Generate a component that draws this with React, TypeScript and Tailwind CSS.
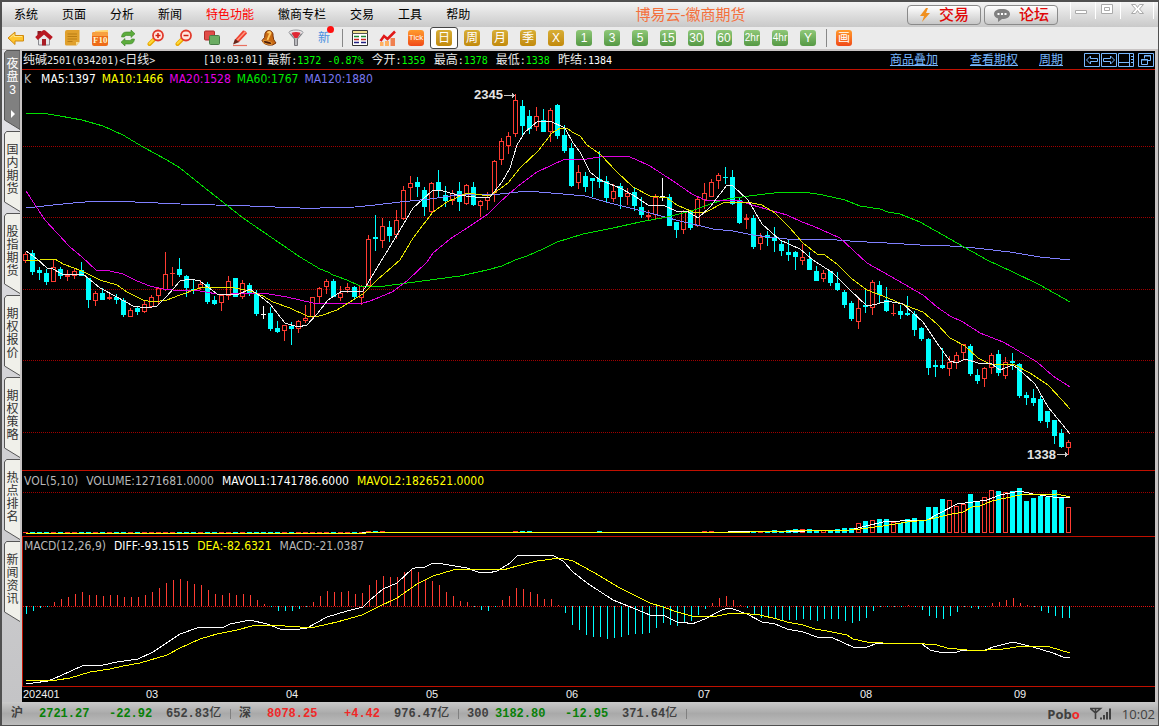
import { ReactNode } from 'react';

type Candle = [kind: 'r' | 'c' | 'w', high: number, top: number, bottom: number, low: number];

const STEP = 7;
const CHART_LEFT = 22;
const CHART_WIDTH = 1133;
const VOL_BASE = 533;
const MACD_ZERO = 606;

const candles: Candle[] = [
  ['r', 252, 254, 261, 263], ['c', 250, 253, 272, 275], ['c', 267, 270, 273, 280], ['c', 269, 273, 282, 285],
  ['r', 260, 267, 282, 282], ['c', 267, 269, 276, 279], ['r', 270, 275, 277, 281], ['r', 268, 271, 276, 279],
  ['c', 262, 270, 276, 276], ['c', 278, 278, 300, 308], ['r', 291, 293, 301, 306], ['c', 288, 293, 300, 300],
  ['r', 293, 297, 299, 300], ['c', 294, 297, 300, 304], ['c', 298, 300, 315, 317], ['r', 308, 310, 317, 317],
  ['c', 306, 308, 312, 315], ['r', 301, 304, 312, 313], ['r', 295, 297, 307, 307], ['r', 287, 288, 296, 305],
  ['r', 252, 274, 290, 291], ['r', 267, 273, 274, 286], ['c', 258, 269, 275, 277], ['c', 275, 276, 288, 297],
  ['c', 280, 289, 291, 294], ['r', 280, 284, 288, 290], ['c', 282, 284, 302, 304], ['c', 296, 300, 304, 305],
  ['r', 294, 295, 303, 311], ['r', 276, 281, 296, 300], ['c', 278, 278, 297, 297], ['r', 280, 283, 297, 299],
  ['c', 283, 285, 294, 296], ['c', 290, 293, 314, 316], ['w', 306, 314, 315, 319], ['c', 307, 313, 329, 331],
  ['c', 321, 328, 332, 333], ['r', 325, 325, 331, 341], ['c', 322, 326, 329, 345], ['r', 320, 321, 329, 333],
  ['r', 305, 318, 321, 323], ['r', 297, 297, 317, 319], ['r', 287, 288, 297, 304], ['r', 279, 281, 287, 294],
  ['c', 279, 281, 297, 297], ['r', 286, 293, 298, 301], ['r', 283, 287, 290, 293], ['c', 286, 287, 297, 299],
  ['r', 285, 286, 298, 305], ['r', 235, 239, 286, 287], ['c', 215, 237, 239, 251], ['r', 218, 226, 241, 248],
  ['c', 221, 227, 236, 242], ['r', 210, 220, 235, 239], ['r', 186, 190, 219, 220], ['r', 176, 183, 188, 201],
  ['c', 177, 182, 187, 197], ['c', 187, 190, 207, 216], ['r', 182, 183, 212, 215], ['c', 170, 182, 191, 197],
  ['c', 186, 195, 201, 207], ['r', 190, 193, 201, 205], ['c', 182, 191, 202, 211], ['r', 184, 185, 204, 205],
  ['c', 182, 187, 205, 206], ['r', 200, 201, 206, 217], ['r', 192, 197, 201, 210], ['r', 160, 161, 193, 202],
  ['r', 138, 141, 160, 165], ['r', 132, 136, 146, 154], ['r', 94, 100, 134, 137], ['c', 100, 106, 126, 136],
  ['c', 110, 116, 129, 134], ['r', 107, 116, 127, 131], ['c', 109, 120, 132, 132], ['r', 108, 110, 132, 142],
  ['c', 104, 105, 136, 139], ['c', 125, 135, 151, 153], ['c', 143, 148, 186, 187], ['r', 165, 172, 183, 189],
  ['c', 172, 176, 187, 192], ['c', 178, 178, 181, 197], ['c', 151, 179, 182, 188], ['c', 176, 181, 198, 202],
  ['r', 184, 191, 199, 202], ['c', 183, 186, 197, 209], ['r', 188, 193, 197, 205], ['c', 188, 192, 206, 211],
  ['c', 197, 207, 215, 218], ['r', 210, 215, 217, 220], ['r', 194, 197, 215, 219], ['w', 178, 196, 197, 201],
  ['c', 194, 197, 226, 226], ['c', 222, 222, 230, 238], ['r', 210, 211, 230, 234], ['c', 211, 212, 228, 230],
  ['r', 197, 199, 226, 227], ['r', 183, 193, 200, 209], ['r', 179, 182, 197, 197], ['r', 173, 175, 181, 189],
  ['c', 167, 177, 178, 184], ['c', 170, 177, 204, 205], ['c', 198, 200, 223, 224], ['r', 214, 218, 220, 229],
  ['c', 215, 218, 247, 249], ['r', 233, 237, 244, 250], ['c', 231, 235, 238, 246], ['c', 227, 237, 241, 252],
  ['c', 240, 244, 251, 256], ['c', 240, 252, 255, 261], ['c', 251, 252, 257, 270], ['r', 244, 257, 261, 265],
  ['c', 252, 259, 270, 270], ['c', 266, 271, 281, 281], ['r', 270, 273, 279, 282], ['c', 271, 271, 283, 286],
  ['c', 272, 283, 290, 291], ['c', 290, 292, 305, 308], ['c', 301, 303, 319, 321], ['r', 298, 308, 322, 329],
  ['c', 288, 305, 307, 313], ['r', 280, 282, 308, 315], ['c', 281, 285, 295, 304], ['c', 287, 300, 311, 312],
  ['r', 304, 313, 314, 316], ['c', 305, 311, 315, 319], ['c', 296, 313, 315, 316], ['c', 311, 314, 330, 336],
  ['c', 327, 328, 339, 341], ['c', 338, 339, 368, 375], ['c', 360, 365, 367, 377], ['c', 348, 365, 368, 369],
  ['r', 356, 362, 369, 376], ['r', 352, 355, 363, 369], ['r', 344, 344, 353, 359], ['c', 344, 346, 374, 376],
  ['c', 369, 375, 381, 384], ['r', 367, 368, 379, 387], ['r', 353, 355, 368, 374], ['c', 350, 354, 373, 376],
  ['r', 357, 362, 376, 379], ['c', 353, 361, 363, 370], ['c', 363, 364, 396, 398], ['c', 392, 395, 398, 405],
  ['c', 389, 398, 403, 406], ['c', 396, 399, 421, 423], ['c', 411, 411, 422, 428], ['c', 420, 420, 436, 444],
  ['c', 429, 433, 447, 448], ['r', 440, 442, 448, 455],
];

// volume tops for the last bars, everything before is nearly flat
const volStart = 105;
const volTops = [
  531, 531, 530, 531, 530, 529, 529, 529, 531, 530, 530, 529, 528, 528, 523, 521, 520, 519, 519, 522, 523, 519, 518,
  520, 507, 507, 499, 500, 506, 504, 494, 502, 497, 490, 491, 492, 491, 488, 501, 498, 496, 497, 490, 497, 507,
];
const volBumps = [49, 50, 51, 70, 71, 72, 82, 97, 98];

const macdEnds = [
  614, 611, 608, 607, 602, 599, 597, 594, 592, 595, 595, 596, 595, 595, 597, 597, 597, 595, 592, 588, 583, 580, 579,
  581, 584, 585, 590, 594, 595, 593, 595, 594, 595, 600, 604, 607, 611, 611, 611, 609, 607, 602, 596, 591, 592, 592,
  591, 594, 593, 585, 580, 576, 577, 577, 572, 569, 572, 579, 581, 585, 592, 596, 601, 602, 607, 610, 611, 607, 600,
  596, 588, 589, 592, 594, 599, 599, 605, 613, 625, 630, 635, 637, 637, 639, 638, 637, 635, 634, 634, 633, 628, 623,
  625, 626, 623, 621, 615, 609, 603, 598, 596, 600, 605, 608, 615, 618, 618, 619, 621, 620, 620, 619, 620, 621, 619,
  619, 619, 621, 623, 621, 618, 611, 607, 607, 607, 607, 605, 607, 610, 616, 618, 619, 616, 612, 607, 608, 609, 607,
  603, 602, 600, 598, 603, 605, 607, 611, 613, 616, 618, 618,
];

const priceLines = [
  {
    color: '#8080ff',
    points:
      '26,208 53,205 73,203 97,201 117,201 135,202 180,204 250,206 300,208 320,208 355,207 375,205 400,202 430,199 450,196 467,194 500,194 527,191 563,194 585,196 610,203 630,208 650,213 680,221 713,229 733,231 753,235 787,239 823,239 850,241 867,242 887,243 920,245 950,246 975,248 1010,252 1040,257 1070,260',
  },
  {
    color: '#00e000',
    points:
      '26,113 42,113 60,116 82,120 103,126 123,135 143,147 167,160 180,168 200,184 243,218 300,257 320,269 328,272 333,275 347,280 360,286 377,287 400,284 430,280 460,276 487,270 502,266 515,260 527,256 543,249 557,242 583,234 613,228 640,222 667,217 687,212 697,209 713,203 727,199 757,195 782,192 810,193 823,195 845,200 860,206 880,209 888,212 900,214 920,222 950,239 987,260 1013,272 1040,285 1070,302',
  },
  {
    color: '#e000e0',
    points:
      '26,191 45,220 70,247 82,257 96,270 110,271 123,274 137,281 150,286 163,289 173,290 200,291 223,295 240,293 263,293 287,297 313,303 340,304 363,303 370,301 380,297 392,292 407,281 427,262 433,253 450,239 467,228 488,214 500,202 517,187 537,172 565,159 587,159 600,157 627,156 635,159 650,166 673,181 692,194 705,200 740,201 752,205 787,215 802,222 813,226 840,238 853,250 867,263 890,276 923,295 937,307 950,316 963,322 980,333 1003,342 1012,347 1037,362 1053,376 1070,387',
  },
  {
    color: '#e6e600',
    points:
      '26,261 55,259 63,264 82,271 100,280 117,285 127,292 143,300 153,302 167,300 180,295 200,288 230,287 250,291 263,296 273,302 290,308 307,316 315,317 323,315 337,310 353,300 363,294 377,280 400,260 413,238 433,212 447,202 467,193 490,196 508,183 520,168 538,151 552,133 560,128 567,128 572,132 580,136 587,145 600,154 617,172 633,187 650,196 667,198 677,205 693,212 706,212 725,202 747,202 762,205 775,213 790,228 803,243 817,254 825,255 838,265 852,279 867,290 883,296 907,306 923,312 937,324 950,338 965,346 978,358 990,364 1013,364 1030,373 1048,385 1062,400 1070,409',
  },
  {
    color: '#f0f0f0',
    points:
      '26,251 37,259 47,268 53,269 62,274 83,274 100,288 117,297 133,306 147,308 157,306 167,296 180,281 190,279 200,281 217,294 237,295 250,289 260,296 270,304 285,323 298,327 307,325 317,314 328,300 342,291 363,291 383,258 400,230 413,208 432,191 440,190 457,195 475,197 490,197 502,182 510,168 517,145 525,132 538,121 550,121 565,128 573,143 580,152 590,172 600,180 620,188 633,195 648,205 663,205 678,212 687,211 698,218 710,207 727,185 733,186 748,200 762,224 780,240 800,249 813,260 833,273 850,290 867,306 877,304 887,301 903,304 923,322 937,343 950,361 957,363 965,359 978,363 992,364 1000,370 1013,365 1023,373 1035,384 1048,407 1062,424 1070,434',
  },
];

const volLines = [
  {
    color: '#ffffff',
    points:
      '26,533 362,533 376,532 728,532 734,531 805,531 850,530 862,527 883,522 900,521 927,520 938,514 957,504 973,502 987,500 1000,495 1020,491 1033,494 1053,497 1070,497',
  },
  {
    color: '#ffff00',
    points:
      '26,533 366,533 380,532 750,532 790,531 850,530 860,529 883,526 907,522 927,520 947,515 963,512 972,507 980,506 992,501 1020,495 1057,494 1070,497',
  },
];

const macdLines = [
  {
    color: '#ffffff',
    points:
      '26,683 33,683 48,681 60,676 82,666 103,665 117,662 138,659 153,652 180,634 200,627 222,628 230,624 250,620 267,624 280,629 300,629 307,628 327,617 347,611 363,607 370,600 383,589 397,583 412,569 418,567 425,567 433,563 443,564 467,568 478,572 488,573 497,571 510,563 517,556 537,555 552,555 563,561 573,572 587,583 613,600 628,606 650,615 663,615 677,622 683,622 692,624 705,619 720,611 727,608 733,609 747,614 762,622 775,624 787,629 803,632 817,637 833,638 853,647 867,647 878,643 913,643 922,644 930,650 943,653 957,652 963,650 983,651 993,647 1013,642 1033,647 1053,653 1063,657 1070,657',
  },
  {
    color: '#ffff00',
    points:
      '26,680 57,680 70,678 90,672 110,669 123,666 140,663 167,655 180,648 200,639 217,634 237,630 252,626 270,625 300,627 315,627 337,622 362,615 378,607 397,598 417,584 433,576 453,570 473,569 503,570 517,566 537,561 560,558 573,561 593,572 620,588 650,603 663,607 677,612 692,616 717,616 727,614 740,613 760,615 777,619 787,622 803,625 815,629 827,631 847,635 853,639 867,642 883,643 913,643 937,645 947,648 967,650 987,650 1003,649 1023,646 1050,647 1070,653',
  },
];

const menus = ['系统', '页面', '分析', '新闻', '特色功能', '徽商专栏', '交易', '工具', '帮助'];
const sideTabs = ['国内期货', '股指期货', '期权报价', '期权策略', '热点排名', '新闻资讯'];
const goldPeriods = ['周', '月', '季', 'X'];
const greenPeriods = ['1', '3', '5', '15', '30', '60', '2hr', '4hr', 'Y'];

const colorOf = { r: '#ff3c32', c: '#00ffff', w: '#ffffff' };

function Lines({ items }: { items: { color: string; points: string }[] }) {
  return (
    <>
      {items.map((l) => (
        <polyline key={l.color} points={l.points} fill="none" stroke={l.color} />
      ))}
    </>
  );
}

function Panel({ top, height, label, children }: { top: number; height: number; label: string; children: ReactNode }) {
  return (
    <svg
      role="img"
      aria-label={label}
      viewBox={`${CHART_LEFT} ${top} ${CHART_WIDTH} ${height}`}
      className="h-auto w-full"
      shapeRendering="crispEdges"
    >
      {children}
    </svg>
  );
}

function DottedLine({ y, color = '#a00000' }: { y: number; color?: string }) {
  return <path d={`M23 ${y + 0.5}H1155`} stroke={color} strokeDasharray="1 1" />;
}

function PricePanel() {
  return (
    <Panel top={88} height={382} label="K线">
      {[146, 217, 289, 360, 432].map((y) => (
        <DottedLine key={y} y={y} />
      ))}
      {candles.map(([kind, high, top, bottom, low], k) => {
        const x = 23 + k * STEP;
        const color = colorOf[kind];
        return (
          <g key={k}>
            {kind === 'r' ? (
              <>
                {top > high && <rect x={x + 2} y={high} width={1} height={top - high} fill={color} />}
                {low > bottom && <rect x={x + 2} y={bottom} width={1} height={low - bottom} fill={color} />}
                <rect x={x + 0.5} y={top + 0.5} width={4} height={Math.max(bottom - top - 1, 0.1)} fill="none" stroke={color} />
              </>
            ) : (
              <>
                <rect x={x + 2} y={high} width={1} height={low - high} fill={color} />
                <rect x={x} y={top} width={5} height={bottom - top} fill={color} />
              </>
            )}
          </g>
        );
      })}
      <Lines items={priceLines} />
      <g fontFamily="Liberation Sans, Arial, sans-serif" fontSize="13" fontWeight="bold" fill="#e4e4e4">
        <text x="474" y="99">2345</text>
        <text x="1027" y="459">1338</text>
      </g>
      <path d="M504 95.5h11M512.500 93v5M513.500 94v3M1057 454.500h11M1065.500 452v5M1066.500 453v3" stroke="#c8c8c8" fill="none" />
    </Panel>
  );
}

function VolumePanel() {
  return (
    <Panel top={488} height={48} label="成交量">
      <DottedLine y={492} />
      {candles.map(([kind], k) => {
        const x = 23 + k * STEP;
        if (k < volStart) {
          const y = volBumps.includes(k) ? 531 : 532;
          return <rect key={k} x={x} y={y} width={5} height={1} fill={kind === 'r' ? colorOf.r : colorOf.c} />;
        }
        const top = volTops[k - volStart];
        return kind === 'r' ? (
          <rect key={k} x={x + 0.5} y={top + 0.5} width={4} height={VOL_BASE - top - 1} fill="#000" stroke={colorOf.r} />
        ) : (
          <rect key={k} x={x} y={top} width={5} height={VOL_BASE - top} fill={colorOf.c} />
        );
      })}
      <Lines items={volLines} />
    </Panel>
  );
}

function MacdPanel() {
  return (
    <Panel top={553} height={133} label="MACD">
      <DottedLine y={MACD_ZERO} color="#e01010" />
      {macdEnds.map((end, k) => (
        <rect
          key={k}
          x={26 + k * STEP}
          y={Math.min(end, MACD_ZERO)}
          width={1}
          height={Math.abs(end - MACD_ZERO)}
          fill={end < MACD_ZERO ? colorOf.r : colorOf.c}
        />
      ))}
      <Lines items={macdLines} />
    </Panel>
  );
}

function Axis() {
  const marks: [number, string][] = [
    [23, '202401'], [146, '03'], [286, '04'], [426, '05'], [566, '06'], [698, '07'], [860, '08'], [1014, '09'],
  ];
  return (
    <svg viewBox={`${CHART_LEFT} 687 ${CHART_WIDTH} 15`} className="h-auto w-full">
      <g fontFamily="Liberation Sans, Arial, sans-serif" fontSize="11" fill="#f0f0f0">
        {marks.map(([x, label]) => (
          <text key={label} x={x} y={698}>
            {label}
          </text>
        ))}
      </g>
    </svg>
  );
}

function ToolButton({ label, children }: { label: string; children: ReactNode }) {
  return (
    <button aria-label={label} className="flex h-[22px] w-7 items-center justify-center">
      {children}
    </button>
  );
}

function ToolIcon({ label, children }: { label: string; children: ReactNode }) {
  return (
    <ToolButton label={label}>
      <svg viewBox="0 0 18 18" className="size-[18px]" fill="none">
        {children}
      </svg>
    </ToolButton>
  );
}

const badge = 'flex size-4 items-center justify-center rounded-[3px] leading-4 text-white';
const gold = 'bg-linear-to-b from-[#d8ae35] to-[#c28a08]';
const green = 'bg-linear-to-b from-[#8fc878] to-[#559944]';
const orange = 'bg-linear-to-b from-[#ff9a2c] to-[#f04818]';

function Magnifier({ plus }: { plus?: boolean }) {
  return (
    <>
      <path d="M7 10.500L2.500 15" stroke="#e8a800" strokeWidth="4" strokeLinecap="round" />
      <path d="M7 10L2.500 14.500" stroke="#ffd83a" strokeWidth="2" strokeLinecap="round" />
      <circle cx="11" cy="6.500" r="5" fill="#ffe6e0" stroke="#e23a2c" strokeWidth="1.800" />
      <path d={plus ? 'M8.500 6.500h5M11 4v5' : 'M8.500 6.500h5'} stroke="#d02010" strokeWidth="1.500" />
    </>
  );
}

function Toolbar() {
  return (
    <div className="flex h-[22px] items-center bg-[#ebebeb]">
      <ToolIcon label="后退">
        <path d="M1 9l7-6v3.500h8.500v5.500H8v3.500z" fill="#ffc52e" stroke="#d08a10" />
        <path d="M3.500 8.500L7 5.500v2h8" stroke="#ffe78a" />
      </ToolIcon>
      <ToolIcon label="主页">
        <path d="M3.500 8.500v7.500h11V8.500L9 4z" fill="#e6e6e8" stroke="#8a8a90" />
        <path d="M2.500 2h4v2l-4 3.500z" fill="#8a1c24" />
        <path d="M1.500 9.500L9 3l7.500 6.500" stroke="#b81822" strokeWidth="4" strokeLinejoin="round" />
        <rect x="7" y="10" width="4" height="6.500" fill="#a81c24" />
      </ToolIcon>
      <ToolIcon label="资讯">
        <path d="M2 3q0-2 2-2h12.500v12l-3 3.500H3.500Q2 16.500 2 15z" fill="#e0a02c" />
        <path d="M4.500 5h9.500M4.500 7.500h9.500M4.500 10h9.500M4.500 12.500h5" stroke="#b87c14" />
        <path d="M16.500 13h-3.500v3.500z" fill="#f8dc90" />
      </ToolIcon>
      <ToolIcon label="F10">
        <path d="M4 2q7-1 13-1v3H4z" fill="#ffd36a" />
        <rect x="1" y="3" width="16" height="14" rx="2" fill="#ee6c18" />
        <path d="M1 7V5q0-2 2-2h12q2 0 2 2v2z" fill="#f8a040" />
        <text x="2" y="14" fontSize="9" fontWeight="bold" fontFamily="Liberation Serif, serif" fill="#fff6cc">F10</text>
      </ToolIcon>
      <ToolIcon label="刷新">
        <path d="M2.500 8q.5-5 5-5H12V1l4 3.800L12 8.500v-2H7.500q-2 0-2.200 1.500z" fill="#5cac3c" stroke="#3c8428" strokeWidth=".6" />
        <path d="M15.500 10q-.5 5-5 5H6v2l-4-3.800L6 9.500v2h4.500q2 0 2.200-1.500z" fill="#5cac3c" stroke="#3c8428" strokeWidth=".6" />
      </ToolIcon>
      <ToolIcon label="放大">
        <Magnifier plus />
      </ToolIcon>
      <ToolIcon label="缩小">
        <Magnifier />
      </ToolIcon>
      <ToolIcon label="叠加">
        <rect x="1.500" y="2" width="10" height="9" rx="1" fill="#e04c48" stroke="#b02c2c" />
        <rect x="6.500" y="6.500" width="10" height="9" rx="1" fill="#6aac62" stroke="#487c48" />
      </ToolIcon>
      <ToolIcon label="画线">
        <path d="M4 10.500L12 1.500q3 0 4 3L8 13z" fill="#ee4030" />
        <path d="M6 11.500l8.500-9" stroke="#ff9880" strokeWidth="1.500" />
        <path d="M4 10l4.500 3L2 15.500z" fill="#6a2418" />
        <path d="M2 16.500h14" stroke="#e87060" strokeWidth="1.200" />
      </ToolIcon>
      <ToolIcon label="预警">
        <path d="M3 11.500Q6.500 9 6 4.500q1-3.500 4.500-3 4 1 3.500 5.500 0 4 3 7-3 3-8 2t-6-4.500z" fill="#c86a14" stroke="#7c3408" />
        <path d="M8.500 4q2-2 3 0-1.500 3-3 7" stroke="#ffc860" strokeWidth="1.800" />
        <ellipse cx="8.500" cy="13.500" rx="4.500" ry="1.500" transform="rotate(14 8.500 13.500)" fill="#4c1c08" stroke="#e89838" />
      </ToolIcon>
      <ToolIcon label="筛选">
        <path d="M3 5l4.500 5v6.500h3V10L15 5z" fill="#b8b8bc" stroke="#78787c" />
        <ellipse cx="9" cy="3.500" rx="7" ry="2.500" fill="#e8e8ea" stroke="#98989c" />
        <path d="M4.500 3.800q4.500-1.500 9 0L10.500 9h-3z" fill="#e02834" />
      </ToolIcon>
      <ToolButton label="新功能">
        <span className="relative text-[12px] leading-4 text-[#4a90e0]">
          新
          <i className="absolute -top-1 -right-1 size-[7px] rounded-full bg-[#ff1010]" />
        </span>
      </ToolButton>
      <div className="flex w-2 justify-center">
        <div className="h-[18px] w-px bg-[#888]" />
      </div>
      <ToolIcon label="报价">
        <path d="M1.500 1.500h15v15h-15z" fill="#fff" stroke="#333" />
        <path d="M2 3h14" stroke="#f0e090" strokeWidth="2" />
        <path d="M1 4.500h16" stroke="#555" />
        <path d="M3 7.500h5M10 7.500h5" stroke="#208830" strokeWidth="1.300" />
        <path d="M3 10.500h5M10 10.500h5" stroke="#c82020" strokeWidth="1.300" />
        <path d="M3 13.500h5M10 13.500h5" stroke="#202080" strokeWidth="1.300" />
      </ToolIcon>
      <ToolIcon label="分时">
        <path d="M1 17v-4h3.500v4zM6 17v-5h4v5z" fill="#ffb060" />
        <path d="M11.500 17V9H16v8z" fill="#f08050" />
        <path d="M1.500 12l3.500-5 3.500 3L16 2.500" stroke="#e01818" strokeWidth="2.500" />
      </ToolIcon>
      <ToolButton label="分笔">
        <span className={`${badge} ${orange} text-[8px]`}>Tick</span>
      </ToolButton>
      <button aria-label="日线" className="flex h-[22px] w-7 items-center justify-center rounded-[3px] border border-[#444] bg-white">
        <span className={`${badge} ${gold} text-[12px]`}>日</span>
      </button>
      {goldPeriods.map((p) => (
        <ToolButton key={p} label={p}>
          <span className={`${badge} ${gold} text-[12px]`}>{p}</span>
        </ToolButton>
      ))}
      {greenPeriods.map((p) => (
        <ToolButton key={p} label={p}>
          <span className={`${badge} ${green} ${p.length > 2 ? 'text-[10px]' : 'text-[12px]'}`}>{p}</span>
        </ToolButton>
      ))}
      <div className="flex w-2 justify-center">
        <div className="h-[18px] w-px bg-[#888]" />
      </div>
      <ToolButton label="画">
        <span className={`${badge} ${orange} text-[12px]`}>画</span>
      </ToolButton>
    </div>
  );
}

function TitleBar() {
  const action =
    'flex h-5 w-[74px] items-center justify-center gap-2 rounded-[4px] border border-[#8a8a8a] bg-linear-to-b from-white to-[#c8c8c8] text-[15px] leading-4 font-medium text-[#e00808]';
  return (
    <header className="flex h-[25px] items-center bg-linear-to-b from-[#f4f4f4] to-[#c9c9c9] pr-1 pl-3">
      <nav className="flex gap-6">
        {menus.map((m) => (
          <button key={m} className={m === '特色功能' ? 'text-[#ff0000]' : 'text-black'}>
            {m}
          </button>
        ))}
      </nav>
      <h1 className="flex-1 pl-1 text-center text-[15px] leading-5 text-[#f4703c]">博易云-徽商期货</h1>
      <div className="flex gap-[3px]">
        <button className={action}>
          <svg viewBox="0 0 12 16" className="h-4 w-3">
            <path d="M7 1L1 9h4l-2 6 8-9H7l2-5z" fill="#f09020" />
          </svg>
          交易
        </button>
        <button className={action}>
          <svg viewBox="0 0 18 14" className="h-[14px] w-[18px]">
            <path d="M9 1c5 0 8 2 8 5s-3 5-8 5l-4 3v-3.500C2.500 9.500 1 8 1 6c0-3 3-5 8-5z" fill="#808080" />
            <path d="M4.500 5h2v2h-2zM8 5h2v2H8zM11.500 5h2v2h-2z" fill="#fff" />
          </svg>
          论坛
        </button>
      </div>
      <div className="ml-3 flex h-[17px] self-start border-x border-white">
        <button aria-label="最小化" className="w-6">
          <svg viewBox="0 0 24 17" className="h-[17px] w-6" fill="#fff" stroke="#aaa">
            <path d="M4.500 8.500h11v3h-11z" />
          </svg>
        </button>
        <button aria-label="最大化" className="w-[26px] border-x border-white">
          <svg viewBox="0 0 24 17" className="h-[17px] w-6" fill="#fff" stroke="#aaa">
            <path d="M5.500 2.500h11v9h-11z" />
            <path d="M8.500 5.500h5v3h-5z" />
          </svg>
        </button>
        <button aria-label="关闭" className="w-8">
          <svg viewBox="0 0 32 17" className="h-[17px] w-8" fill="#fff" stroke="#aaa">
            <path d="M10.500 2.500h4l2 3 2-3h4l-4 4.500 4 4.500h-4l-2-3-2 3h-4l4-4.500z" />
          </svg>
        </button>
      </div>
    </header>
  );
}

function SideTabs() {
  return (
    <nav className="flex w-[18px] flex-col bg-linear-to-b from-[#e4e4e8] to-[#c4c4c6]">
      <button className="relative flex h-20 w-[18px] flex-col items-center pt-2 pl-[3px] leading-[13px] text-white">
        <svg viewBox="0 0 18 80" className="absolute inset-0 h-20 w-[18px]">
          <path d="M2.500 70V3l2-2.500H18V79.500z" fill="#808080" stroke="#555" />
          <path d="M9 60v8l4-4z" fill="#fff" />
        </svg>
        <span className="relative w-3 break-all">夜盘3</span>
      </button>
      {sideTabs.map((t) => (
        <button key={t} className="relative flex h-[82px] w-[18px] flex-col items-center pt-[14px] pl-[3px] leading-[13px] text-[#333]">
          <svg viewBox="0 0 18 82" className="absolute inset-0 h-[82px] w-[18px]">
            <path d="M2.500 72V4l2-2.500H18V81.500z" fill="#f0f0ea" />
            <path d="M18 1.500H4.500l-2 2.500v68L18 81.500" fill="none" stroke="#555" />
          </svg>
          <span className="relative w-3 break-all">{t}</span>
        </button>
      ))}
    </nav>
  );
}

function Quote({ label, value, white }: { label: string; value: string; white?: boolean }) {
  return (
    <span>
      {label}
      <span className="font-['DejaVu_Sans_Mono',monospace] text-[10px]">
        :<span className={white ? 'text-white' : 'text-[#00ff00]'}>{value}</span>
      </span>
    </span>
  );
}

function QuoteHeader() {
  const mono = "font-['DejaVu_Sans_Mono',monospace] text-[10px]";
  const nav = [
    ['上一个', 'M2.500 7l4-4v2.500h7v3h-7V11z'],
    ['下一个', 'M13.500 7l-4-4v2.500h-7v3h7V11z'],
    ['侧栏', 'M0 9.500h11M11.500 1v12M13 3.500h2M13 6.500h2M13 9.500h2'],
  ];
  return (
    <div className="flex h-[19px] items-center justify-between border-b border-[#c01000] px-px whitespace-nowrap text-[#e8e8e8]">
      <div className="flex items-center">
        <div className="w-[180px]">
          纯碱<span className={mono}>2501(034201)&lt;</span>日线<span className={mono}>&gt;</span>
        </div>
        <span className={`${mono} mr-1`}>[10:03:01]</span>
        <div className="flex items-center gap-2">
          <span>
            <Quote label="最新" value="1372" />
            <span className={`${mono} pl-[6px] text-[#00ff00]`}>-0.87%</span>
          </span>
          <Quote label="今开" value="1359" />
          <Quote label="最高" value="1378" />
          <Quote label="最低" value="1338" />
          <Quote label="昨结" value="1384" white />
        </div>
      </div>
      <div className="flex items-center text-[#78b8ff]">
        <a href="#overlay" className="mr-8 underline">商品叠加</a>
        <a href="#options" className="mr-[21px] underline">查看期权</a>
        <a href="#period" className="mr-[21px] underline">周期</a>
        <div className="flex gap-px">
          {nav.map(([label, d]) => (
            <button key={label} aria-label={label}>
              <svg viewBox="0 0 16 14" className="h-[14px] w-4" fill="none" stroke="currentColor">
                <path d="M.5 .5h15v13H.5z" />
                <path d={d} />
              </svg>
            </button>
          ))}
          <button aria-label="还原" className="ml-[3px]">
            <svg viewBox="0 0 16 14" className="h-[14px] w-4" fill="none" stroke="currentColor">
              <path d="M.5 .5h15v13H.5zM6.500 5.500v-3h6v5h-3M3.500 6.500h6v5h-6zM6 3h7M3 7h7" />
            </svg>
          </button>
        </div>
      </div>
    </div>
  );
}

const legend =
  "flex items-center pl-[2px] font-['DejaVu_Sans_Condensed','DejaVu_Sans',sans-serif] text-[12px] leading-4 whitespace-nowrap text-[#b8b8b8]";

function StatusBar() {
  const gray = 'text-[#404040]';
  const indexes = [
    { name: '沪', value: '2721.27', change: '-22.92', turnover: '652.83', color: 'text-[#088008]', cols: 'grid-cols-[28px_70px_57px_64px]' },
    { name: '深', value: '8078.25', change: '+4.42', turnover: '976.47', color: 'text-[#f02828]', cols: 'grid-cols-[28px_77px_50px_64px]' },
    { name: '300', value: '3182.80', change: '-12.95', turnover: '371.64', color: 'text-[#088008]', cols: 'grid-cols-[28px_70px_57px_64px]' },
  ];
  return (
    <footer className="flex h-[23px] items-center bg-linear-to-b from-[#cacaca] via-[#a9a9a9] to-[#bcbcbc] pr-[3px] pl-[9px] font-['Liberation_Mono','Noto_Sans_CJK_SC',monospace] text-[12px]">
      {indexes.map((i) => (
        <div key={i.name} className="mr-2 flex items-center">
          <div className={`grid ${i.cols} items-center font-bold whitespace-nowrap`}>
            <span className={gray}>{i.name}</span>
            <span className={i.color}>{i.value}</span>
            <span className={i.color}>{i.change}</span>
            <span className={gray}>
              {i.turnover}
              <span className="font-medium">亿</span>
            </span>
          </div>
          <div className="h-[10px] w-px bg-[#808080]" />
        </div>
      ))}
      <div className={`ml-auto flex items-center font-['Open_Sans',sans-serif] ${gray}`}>
        <span className="mr-[10px] text-[13px] font-bold">
          Pob<span className="text-[#f02828]">o</span>
        </span>
        <svg viewBox="0 0 22 14" className="mr-[10px] h-[14px] w-[22px]" fill="none" stroke="#404040">
          <path d="M.5 1.500h10L5.500 6zM5.500 2v10" strokeWidth="1.600" />
          <path d="M11 12.500v-2M14 12.500V8M17 12.500V5M20 12.500V1.500" strokeWidth="2" />
        </svg>
        <span className="text-[13px]">10:02</span>
      </div>
    </footer>
  );
}

export default function App() {
  return (
    <div className="flex min-h-screen flex-col border-2 border-r border-b border-[#505050] bg-[#d0cccc] font-['Liberation_Sans','Noto_Sans_CJK_SC',sans-serif] text-[12px] leading-4">
      <TitleBar />
      <Toolbar />
      <div className="flex flex-1 border-t border-[#c8c4c4]">
        <SideTabs />
        <main className="min-w-0 flex-1 border-t border-r-[3px] border-l-2 border-[#c8c4c4] bg-black">
          <QuoteHeader />
          <section className="border-b border-[#c01000]">
            <div className={`${legend} h-[18px] gap-[6px]`}>
              <span className="mr-1">K</span>
              <span className="text-white">MA5:1397</span>
              <span className="text-[#ffff00]">MA10:1466</span>
              <span className="text-[#e800e8]">MA20:1528</span>
              <span className="text-[#00e800]">MA60:1767</span>
              <span className="text-[#7878f0]">MA120:1880</span>
            </div>
            <PricePanel />
          </section>
          <section className="border-b border-[#c01000]">
            <div className={`${legend} h-[17px] gap-2 pt-[2px]`}>
              <span>VOL(5,10)</span>
              <span>VOLUME:1271681.0000</span>
              <span className="text-white">MAVOL1:1741786.6000</span>
              <span className="text-[#ffff00]">MAVOL2:1826521.0000</span>
            </div>
            <VolumePanel />
          </section>
          <section className="border-b border-[#c01000] shadow-[inset_1px_0_0_#c01000]">
            <div className={`${legend} h-4 gap-2 pt-[2px]`}>
              <span>MACD(12,26,9)</span>
              <span className="text-white">DIFF:-93.1515</span>
              <span className="text-[#ffff00]">DEA:-82.6321</span>
              <span>MACD:-21.0387</span>
            </div>
            <MacdPanel />
          </section>
          <Axis />
        </main>
      </div>
      <StatusBar />
    </div>
  );
}
